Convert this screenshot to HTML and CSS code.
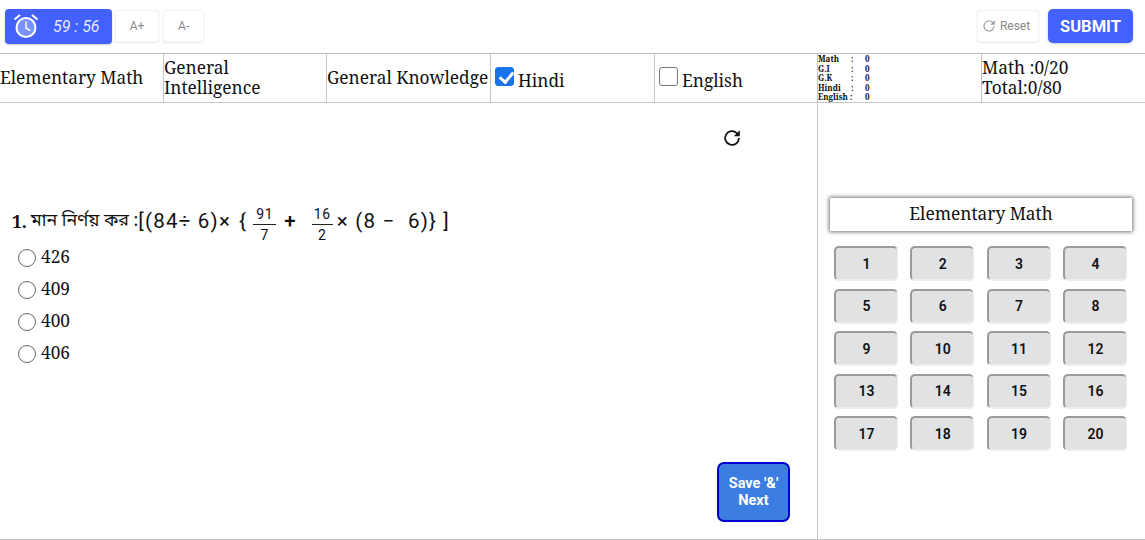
FILE: index.html
```html
<!DOCTYPE html>
<html lang="bn">
<head>
<meta charset="utf-8">
<title>Exam</title>
<link rel="stylesheet" href="styles.css">
</head>
<body>
<header class="topbar">
  <div class="left-tools">
    <div class="timer">
      <svg class="clock" viewBox="0 0 26 26" width="26" height="26" aria-hidden="true">
        <circle cx="13" cy="14.5" r="9.5" fill="#7b93ff" stroke="#fff" stroke-width="2"/>
        <path d="M13 8.500V15l4.200 2.600" fill="none" stroke="#fff" stroke-width="1.500"/>
        <path d="M1.500 6.500 7 2M24.500 6.500 19 2" fill="none" stroke="#fff" stroke-width="2.200"/>
      </svg>
      <span class="time">59 : 56</span>
    </div>
    <button class="ghost font-up">A+</button>
    <button class="ghost font-down">A-</button>
  </div>
  <div class="right-tools">
    <button class="ghost reset">
      <svg viewBox="0 0 24 24" width="16" height="16" aria-hidden="true"><path d="M19.500 12a7.500 7.500 0 1 1-2.300-5.400L19.500 9" fill="none" stroke="#999" stroke-width="1.700"/><path d="M20.500 3.500V10H14z" fill="#999"/></svg>
      <span>Reset</span>
    </button>
    <button class="submit">SUBMIT</button>
  </div>
</header>

<nav class="tabs">
  <div class="tab">Elementary Math</div>
  <div class="tab">General Intelligence</div>
  <div class="tab">General Knowledge</div>
  <label class="tab lang hindi"><input type="checkbox" checked><span>Hindi</span></label>
  <label class="tab lang english"><input type="checkbox"><span>English</span></label>
  <div class="tab stats">
    <div class="stat"><span class="k">Math</span><span class="c">:</span><span>0</span></div>
    <div class="stat"><span class="k">G.I</span><span class="c">:</span><span>0</span></div>
    <div class="stat"><span class="k">G.K</span><span class="c">:</span><span>0</span></div>
    <div class="stat"><span class="k">Hindi</span><span class="c">:</span><span>0</span></div>
    <div class="stat"><span class="k wide">English :</span><span>0</span></div>
  </div>
  <div class="tab score">Math :0/20<br>Total:0/80</div>
</nav>

<main class="main">
  <section class="question">
    <div class="refresh-row">
      <svg viewBox="0 0 24 24" width="22" height="22" aria-hidden="true"><path d="M19.500 12a7.500 7.500 0 1 1-2.300-5.400L19.500 9" fill="none" stroke="#111" stroke-width="1.900"/><path d="M20.500 3.500V10H14z" fill="#111"/></svg>
    </div>
    <div class="q-text">
      <b class="q-no">1.</b>
      <span class="q-bn">মান নির্ণয় কর :</span>
      <span class="q-math">
        <span class="expr first">[(84÷ 6)×</span>
        <span class="expr brace">{</span>
        <span class="frac"><span class="num">91</span><span class="den">7</span></span>
        <span class="expr plus">+</span>
        <span class="frac second"><span class="num">16</span><span class="den">2</span></span>
        <span class="expr rest">× (8 −&nbsp; 6)}</span>
        <span class="expr close">]</span>
      </span>
    </div>
    <ul class="options">
      <li><span class="radio"></span>426</li>
      <li><span class="radio"></span>409</li>
      <li><span class="radio"></span>400</li>
      <li><span class="radio"></span>406</li>
    </ul>
    <div class="actions"><button class="save">Save '&amp;' Next</button></div>
  </section>
  <aside class="palette">
    <div class="pal-title">Elementary Math</div>
    <div class="pal-grid">
      <button class="num-btn">1</button><button class="num-btn">2</button><button class="num-btn">3</button><button class="num-btn">4</button>
      <button class="num-btn">5</button><button class="num-btn">6</button><button class="num-btn">7</button><button class="num-btn">8</button>
      <button class="num-btn">9</button><button class="num-btn">10</button><button class="num-btn">11</button><button class="num-btn">12</button>
      <button class="num-btn">13</button><button class="num-btn">14</button><button class="num-btn">15</button><button class="num-btn">16</button>
      <button class="num-btn">17</button><button class="num-btn">18</button><button class="num-btn">19</button><button class="num-btn">20</button>
    </div>
  </aside>
</main>
</body>
</html>
```

FILE: styles.css
```css
* { box-sizing: border-box; }
html, body { margin: 0; height: 100%; }
body {
  width: 1145px;
  height: 540px;
  overflow: hidden;
  background: #fff;
  color: #111;
  font-family: "Noto Serif", "DejaVu Serif", serif;
}
button { font-family: Roboto, sans-serif; cursor: pointer; }

.topbar {
  height: 53px;
  display: flex;
  justify-content: space-between;
  align-items: center;
  padding: 0 12px 1px 5px;
}
.left-tools, .right-tools { display: flex; align-items: center; }
.left-tools { gap: 4px; }
.right-tools { gap: 9px; }
.timer {
  width: 107px;
  height: 35px;
  background: #4361ff;
  border-radius: 4px;
  display: flex;
  align-items: center;
  padding-left: 8px;
  color: #e4e8ff;
  box-shadow: 0 1px 2px rgba(0,0,0,.2);
  margin-right: -1px;
}
.time {
  margin-left: 14px;
  font: italic 400 16px Roboto, sans-serif;
}
.ghost {
  height: 32px;
  background: #fff;
  border: 1px solid #f1f1f1;
  border-radius: 3px;
  box-shadow: 0 1px 2px rgba(0,0,0,.08);
  color: #8a8a8a;
  font-size: 12px;
  padding: 0;
}
.font-up { width: 44px; }
.font-down { width: 41px; }
.reset {
  width: 62px;
  display: flex;
  align-items: center;
  justify-content: center;
  gap: 3px;
  padding-right: 5px;
}
.submit {
  width: 85px;
  height: 34px;
  background: #4361ff;
  color: #fff;
  border: 0;
  border-radius: 5px;
  font-size: 16.500px;
  font-weight: 700;
  box-shadow: 0 1px 3px rgba(0,0,0,.2);
}

.tabs {
  height: 50px;
  display: grid;
  grid-template-columns: 164px 163px 164px 164px 163px 164px 163px;
  border-top: 1px solid #bdbdbd;
  border-bottom: 1px solid #c4c4c4;
}
.tab {
  font-size: 17.300px;
  line-height: 20px;
  border-right: 1px solid #c4c4c4;
  display: flex;
  align-items: center;
  min-width: 0;
  padding-bottom: 1px;
}
.lang { padding-left: 4px; padding-bottom: 0; }
.lang input {
  appearance: none;
  width: 19px;
  height: 19px;
  margin: 0 4px 4px 0;
  border: 1px solid #777;
  border-radius: 3px;
  background: #fff;
  position: relative;
}
.lang input:checked {
  background: #1a73e8;
  border-color: #1a73e8;
}
.lang input:checked::after {
  content: "";
  position: absolute;
  left: 5.500px;
  top: 1.500px;
  width: 6px;
  height: 11px;
  border: solid #fff;
  border-width: 0 3px 3px 0;
  transform: rotate(40deg);
}
.lang span { padding-top: 6px; }
.stats {
  display: block;
  font-size: 8px;
  font-weight: 700;
  line-height: 9.500px;
  padding: 0;
}
.stat { display: flex; }
.stat .k { width: 33px; white-space: nowrap; }
.stat .k.wide { width: 47px; }
.stat .c { width: 14px; }
.score {
  display: block;
  padding-top: 4px;
  border-right: 0;
}

.main {
  height: 437px;
  display: flex;
  border-bottom: 1px solid #c4c4c4;
}
.question {
  width: 818px;
  border-right: 1px solid #c4c4c4;
  position: relative;
  padding-left: 12px;
}
.refresh-row {
  height: 76px;
  display: flex;
  justify-content: flex-end;
  padding: 24px 74px 0 0;
}
.q-text {
  height: 38px;
  margin-top: 23px;
  display: flex;
  align-items: center;
  white-space: pre;
  font-size: 17.300px;
}
.q-no { font-size: 17.300px; margin-right: 4px; }
.q-bn { font-family: "Noto Sans Bengali", "Noto Serif Bengali", "Noto Sans", sans-serif; font-size: 17.800px; }
.q-math {
  display: flex;
  align-items: center;
  font-family: Roboto, sans-serif;
  font-size: 20.500px;
  letter-spacing: 1.200px;
  white-space: pre;
}
.expr { display: block; }
.brace { margin-left: 8px; }
.frac {
  display: flex;
  flex-direction: column;
  align-items: center;
  width: 23px;
  margin-left: 6px;
  margin-top: 6px;
  font-size: 14px;
  line-height: 20px;
  letter-spacing: .6px;
}
.frac .num { width: 100%; text-align: center; border-bottom: 1px solid #222; }
.plus { margin-left: 8px; margin-right: 15px; font-weight: 500; }
.frac.second { width: 21px; margin-left: 0; margin-right: 4px; }
.close { margin-left: 6px; }

.options { list-style: none; margin: 0; padding: 0 0 0 6px; }
.options li {
  height: 32px;
  display: flex;
  align-items: center;
  font-size: 17.300px;
}
.radio {
  width: 18px;
  height: 18px;
  border: 1px solid #666;
  border-radius: 50%;
  margin: 4px 5px 0 0;
  flex: none;
}
.actions {
  position: absolute;
  left: 717px;
  top: 359px;
}
.save {
  display: block;
  width: 73px;
  height: 60px;
  background: #3b7de0;
  color: #fff;
  border: 2px solid #0000d0;
  border-radius: 7px;
  font-size: 14.500px;
  font-weight: 700;
  line-height: 17px;
  padding: 0 5px;
}

.palette {
  width: 327px;
  padding: 95px 12px 0 12px;
}
.pal-title {
  height: 33px;
  width: 302px;
  line-height: 31px;
  text-align: center;
  font-size: 17.300px;
  box-shadow: 0 0 4px 1px rgba(0,0,0,.55);
}
.pal-grid {
  margin-top: 15px;
  padding-left: 4px;
  display: grid;
  grid-template-columns: repeat(4, 64px);
  column-gap: 12.300px;
  row-gap: 7.500px;
}
.num-btn {
  height: 35px;
  background: #e1e2e4;
  color: #111;
  border: 0;
  border-top: 2px solid #9a9a9a;
  border-left: 2px solid #9a9a9a;
  border-right: 1px solid #ececec;
  border-bottom: 2px solid #ececec;
  border-radius: 5px;
  font-size: 14px;
  font-weight: 600;
  padding: 0;
}
```
